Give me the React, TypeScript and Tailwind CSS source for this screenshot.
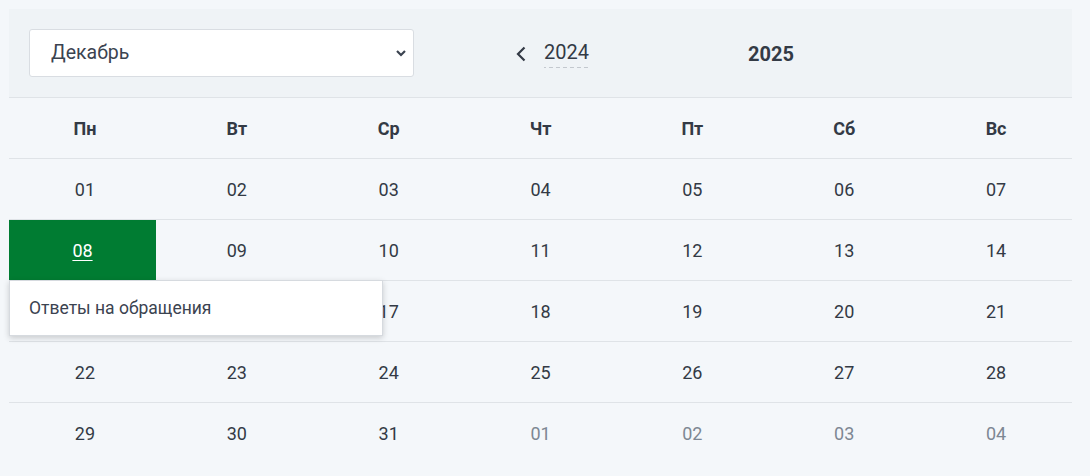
const DAYS = ["Пн", "Вт", "Ср", "Чт", "Пт", "Сб", "Вс"];

const WEEKS: { d: string; muted?: boolean; active?: boolean }[][] = [
  ["01", "02", "03", "04", "05", "06", "07"].map((d) => ({ d })),
  [{ d: "08", active: true }, ...["09", "10", "11", "12", "13", "14"].map((d) => ({ d }))],
  ["15", "16", "17", "18", "19", "20", "21"].map((d) => ({ d })),
  ["22", "23", "24", "25", "26", "27", "28"].map((d) => ({ d })),
  [
    ...["29", "30", "31"].map((d) => ({ d })),
    ...["01", "02", "03", "04"].map((d) => ({ d, muted: true })),
  ],
];

export default function App() {
  return (
    <div className="min-h-[476px] bg-[#f4f7fa] p-[9px] font-['Roboto',sans-serif] text-[#333a45]">
      <div className="relative w-[1063px]">
        <div className="flex h-[89px] items-center border-b border-[#dfe3e7] bg-[#eff3f6] px-5">
          <div className="relative h-12 w-[385px]">
            <select className="h-12 w-full appearance-none rounded-[3px] border border-[#d9dde2] bg-white pl-[21px] text-[19.5px] text-[#3b4350] outline-none">
              <option>Декабрь</option>
            </select>
            <svg
              className="pointer-events-none absolute right-[7px] top-[20px]"
              width="12"
              height="8"
              viewBox="0 0 12 8"
            >
              <path d="M2 2l4 4 4-4" stroke="#3b4350" strokeWidth="2.2" fill="none" />
            </svg>
          </div>
          <div className="ml-[102px] flex items-center pt-[2px]">
            <svg width="10" height="16" viewBox="0 0 10 16">
              <path d="M8.5 1.5L2 8l6.5 6.5" stroke="#333a45" strokeWidth="2.2" fill="none" />
            </svg>
            <span className="ml-[18px] bg-[linear-gradient(to_right,#c3c8ce_60%,transparent_60%)] bg-[length:7px_1px] bg-bottom bg-repeat-x pb-[4px] text-[20px] leading-6">
              2024
            </span>
            <span className="ml-[159px] text-[20px] font-bold leading-6">2025</span>
          </div>
        </div>

        <div className="grid h-[60px] grid-cols-7 items-center">
          {DAYS.map((d) => (
            <div key={d} className="text-center text-[18px] font-bold">
              {d}
            </div>
          ))}
        </div>

        {WEEKS.map((week, i) => (
          <div key={i} className="grid h-[61px] grid-cols-7 border-t border-[#dfe3e7]">
            {week.map((c, j) => (
              <div key={j} className="flex items-stretch">
                <div
                  className={
                    c.active
                      ? "flex w-[147px] items-center justify-center bg-[#007c32] text-[18px] text-white underline underline-offset-[3px]"
                      : c.muted
                      ? "flex flex-1 items-center justify-center text-[18px] text-[#7d8793]"
                      : "flex flex-1 items-center justify-center text-[18px]"
                  }
                >
                  {c.d}
                </div>
              </div>
            ))}
          </div>
        ))}

        <div className="absolute left-0 top-[271px] flex h-[56px] w-[374px] items-center border border-[#d6dadf] bg-white pl-[19px] text-[17.5px] text-[#3b4350] shadow-[0_2px_6px_rgba(0,0,0,0.18)]">
          Ответы на обращения
        </div>
      </div>
    </div>
  );
}
